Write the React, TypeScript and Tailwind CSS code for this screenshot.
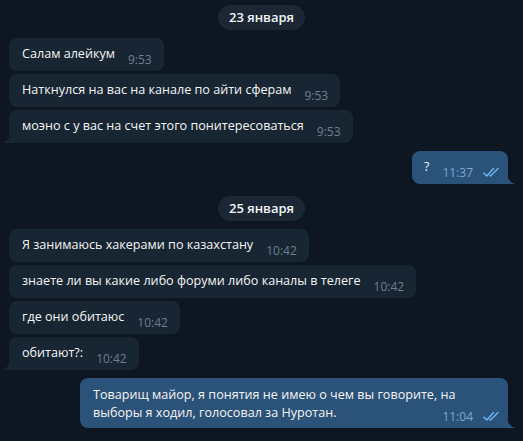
import React from "react";

const Checks = () => (
  <svg width="18" height="11" viewBox="0 0 18 11" className="ml-[10px] mb-[1px]" fill="none">
    <path d="M1 6.2 L3.8 9 L10.5 1.5" stroke="#6cb5f2" strokeWidth="1.5" strokeLinecap="round" strokeLinejoin="round" />
    <path d="M7 8.5 L7.5 9 L15 1.5" stroke="#6cb5f2" strokeWidth="1.5" strokeLinecap="round" strokeLinejoin="round" />
  </svg>
);

const TailIn = () => (
  <svg width="8" height="11" viewBox="0 0 8 11" className="absolute left-[-7px] bottom-0">
    <path d="M8 0 C8 5 5.5 9 0 11 L8 11 Z" fill="#182533" />
  </svg>
);

const TailOut = () => (
  <svg width="8" height="11" viewBox="0 0 8 11" className="absolute right-[-7px] bottom-0">
    <path d="M0 0 C0 5 2.5 9 8 11 L0 11 Z" fill="#2b5278" />
  </svg>
);

const DatePill = ({ children, className = "" }: { children: React.ReactNode; className?: string }) => (
  <div
    className={`self-center h-[25px] px-[11px] rounded-full bg-[#1b2734] text-[#f3f5f7] text-[13px] font-semibold leading-[25px] ${className}`}
  >
    {children}
  </div>
);

const In = ({ text, time, tail = false }: { text: string; time: string; tail?: boolean }) => (
  <div
    className={`relative self-start ml-[9px] h-[33px] flex items-end bg-[#182533] pl-[13px] pr-[12px] pt-[7px] pb-[5px] ${
      tail ? "rounded-[8px] rounded-bl-none" : "rounded-[8px]"
    }`}
  >
    <span className="text-[12.6px] leading-[18px] text-[#f5f5f5] mb-[3px] whitespace-nowrap">{text}</span>
    <span className="ml-[13px] text-[12px] leading-[13px] text-[#6d7f8f]">{time}</span>
    {tail && <TailIn />}
  </div>
);

export default function App() {
  return (
    <div
      className="w-[523px] h-[441px] bg-[#0e1621] flex flex-col pt-[5px] overflow-hidden"
      style={{ fontFamily: '"Open Sans", "Noto Sans", sans-serif' }}
    >
      <DatePill>23 января</DatePill>
      <div className="mt-[8px] flex flex-col gap-[3px]">
        <In text="Салам алейкум" time="9:53" />
        <In text="Наткнулся на вас на канале по айти сферам" time="9:53" />
        <In text="моэно с у вас на счет этого понитересоваться" time="9:53" tail />
      </div>

      <div className="relative self-end mr-[15px] mt-[8px] h-[33px] flex items-end bg-[#2b5278] rounded-[8px] rounded-br-none pl-[12px] pr-[7px] pt-[7px] pb-[5px]">
        <span className="text-[12.6px] leading-[18px] text-[#f5f5f5] mb-[3px]">?</span>
        <span className="ml-[13px] text-[12px] leading-[13px] text-[#7da8d3]">11:37</span>
        <Checks />
        <TailOut />
      </div>

      <DatePill className="mt-[12px]">25 января</DatePill>

      <div className="mt-[8px] flex flex-col gap-[3px]">
        <In text="Я занимаюсь хакерами по казахстану" time="10:42" />
        <In text="знаете ли вы какие либо форуми либо каналы в телеге" time="10:42" />
        <In text="где они обитаюс" time="10:42" />
        <In text="обитают?:" time="10:42" tail />
      </div>

      <div className="relative self-end mr-[15px] mt-[8px] w-[428px] flex flex-col bg-[#2b5278] rounded-[8px] rounded-br-none pl-[13px] pr-[7px] pt-[8px] pb-[5px]">
        <span className="text-[12.6px] leading-[18px] text-[#f5f5f5] whitespace-nowrap">
          Товарищ майор, я понятия не имею о чем вы говорите, на
        </span>
        <div className="flex items-end justify-between">
          <span className="text-[12.6px] leading-[18px] text-[#f5f5f5] mb-[1px] whitespace-nowrap">
            выборы я ходил, голосовал за Нуротан.
          </span>
          <div className="flex items-end">
            <span className="text-[12px] leading-[13px] text-[#7da8d3]">11:04</span>
            <Checks />
          </div>
        </div>
        <TailOut />
      </div>
    </div>
  );
}
